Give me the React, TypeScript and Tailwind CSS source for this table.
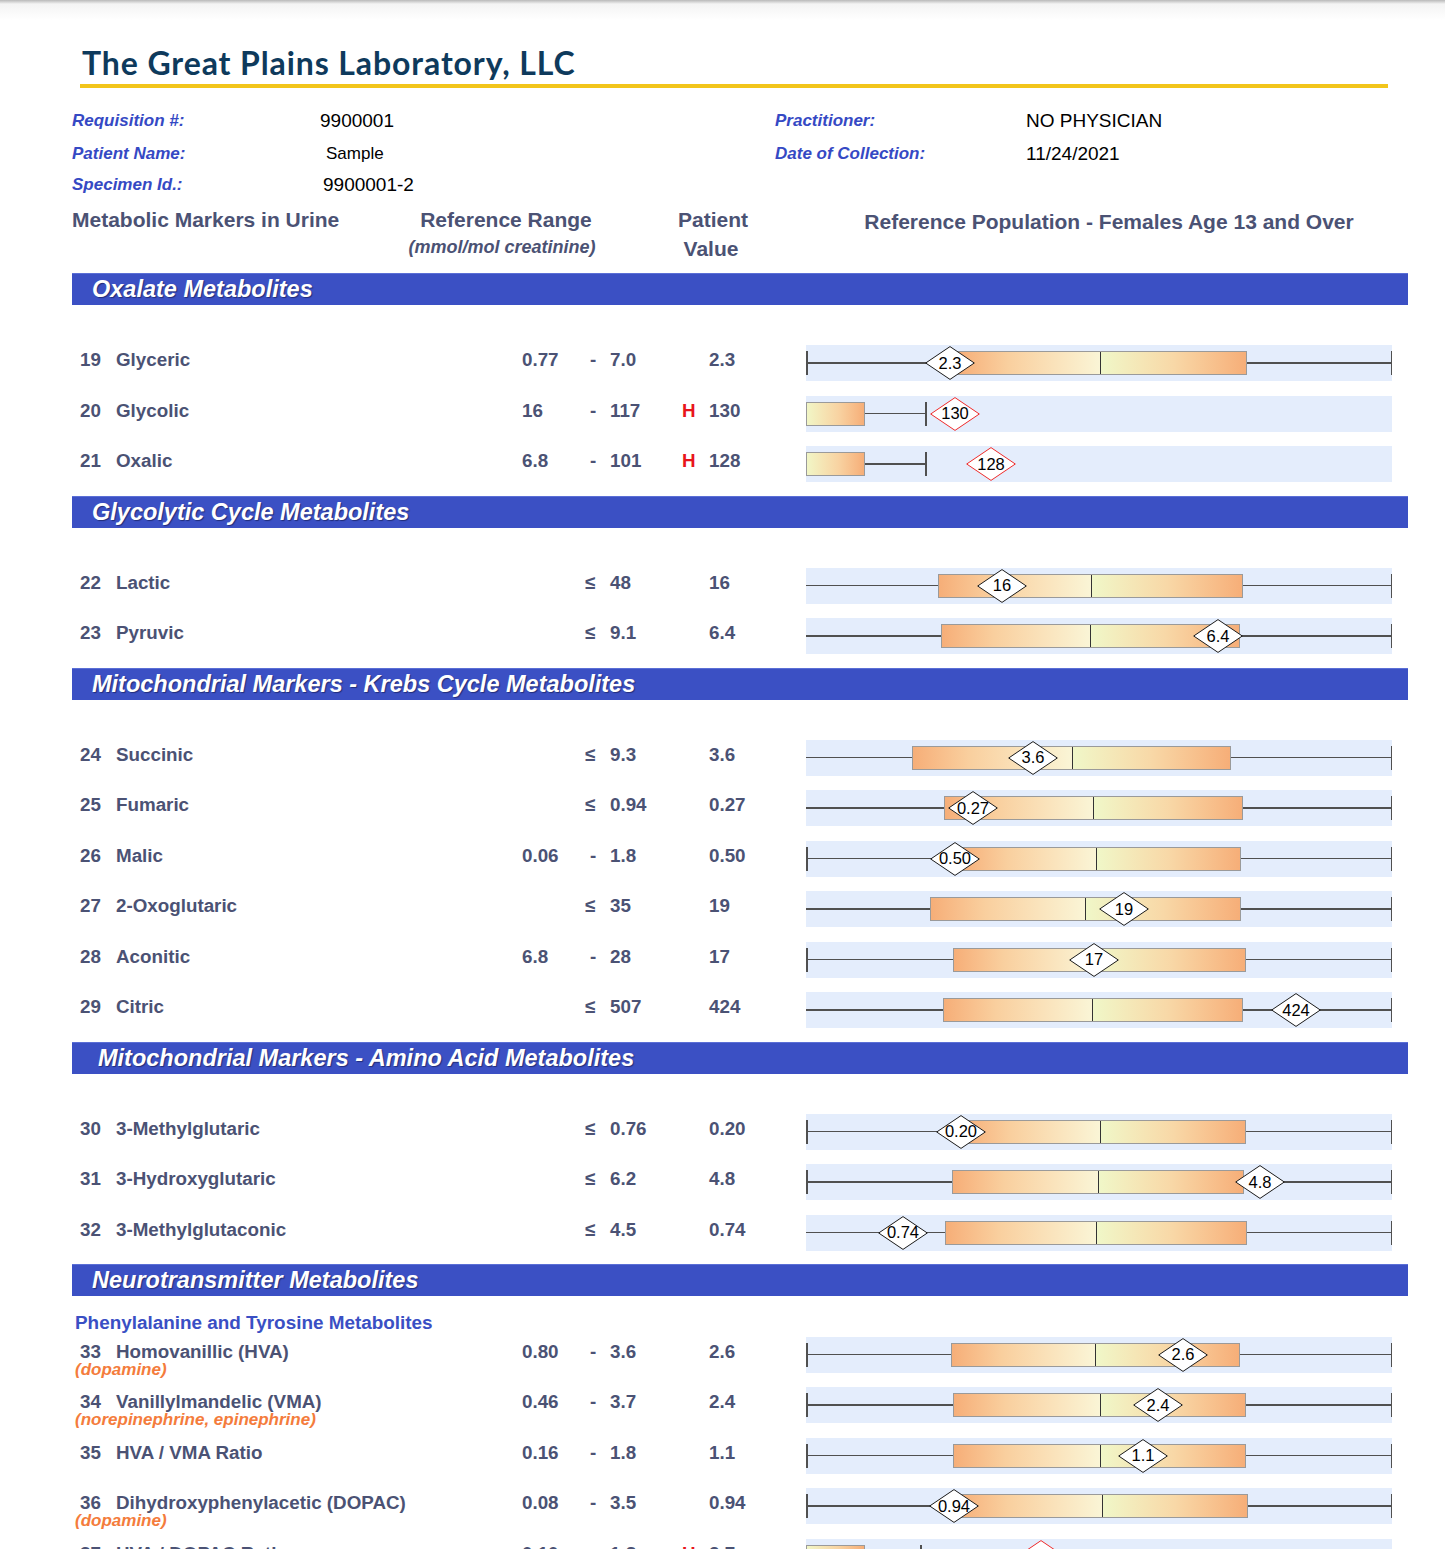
import React from "react";

type Diamond = { x: number; label: string; red?: boolean };
type BarSpec = {
  short?: boolean;
  box: [number, number];
  median?: number;
  leftCap?: boolean;
  whiskerEnd?: number;
  diamond: Diamond;
};
type RowSpec = {
  n: string;
  name: string;
  lo?: string;
  hi: string;
  h?: boolean;
  v: string;
  sub?: string;
  bar: BarSpec;
};
type Section = { title: string; indent?: boolean; subheader?: string; rows: RowSpec[] };

const BAND_W = 586;

const sections: Section[] = [
  {
    title: "Oxalate Metabolites",
    rows: [
      { n: "19", name: "Glyceric", lo: "0.77", hi: "7.0", v: "2.3", bar: { box: [151, 441], median: 294, leftCap: true, diamond: { x: 144, label: "2.3" } } },
      { n: "20", name: "Glycolic", lo: "16", hi: "117", h: true, v: "130", bar: { short: true, box: [0, 59], whiskerEnd: 119, diamond: { x: 149, label: "130", red: true } } },
      { n: "21", name: "Oxalic", lo: "6.8", hi: "101", h: true, v: "128", bar: { short: true, box: [0, 59], whiskerEnd: 119, diamond: { x: 185, label: "128", red: true } } },
    ],
  },
  {
    title: "Glycolytic Cycle Metabolites",
    rows: [
      { n: "22", name: "Lactic", hi: "48", v: "16", bar: { box: [132, 437], median: 285, diamond: { x: 196, label: "16" } } },
      { n: "23", name: "Pyruvic", hi: "9.1", v: "6.4", bar: { box: [135, 434], median: 284, diamond: { x: 412, label: "6.4" } } },
    ],
  },
  {
    title: "Mitochondrial Markers - Krebs Cycle Metabolites",
    rows: [
      { n: "24", name: "Succinic", hi: "9.3", v: "3.6", bar: { box: [106, 425], median: 266, diamond: { x: 227, label: "3.6" } } },
      { n: "25", name: "Fumaric", hi: "0.94", v: "0.27", bar: { box: [138, 437], median: 287, diamond: { x: 167, label: "0.27" } } },
      { n: "26", name: "Malic", lo: "0.06", hi: "1.8", v: "0.50", bar: { box: [152, 435], median: 290, leftCap: true, diamond: { x: 149, label: "0.50" } } },
      { n: "27", name: "2-Oxoglutaric", hi: "35", v: "19", bar: { box: [124, 435], median: 279, diamond: { x: 318, label: "19" } } },
      { n: "28", name: "Aconitic", lo: "6.8", hi: "28", v: "17", bar: { box: [147, 440], median: 288, leftCap: true, diamond: { x: 288, label: "17" } } },
      { n: "29", name: "Citric", hi: "507", v: "424", bar: { box: [137, 437], median: 286, diamond: { x: 490, label: "424" } } },
    ],
  },
  {
    title: "Mitochondrial Markers - Amino Acid Metabolites",
    indent: true,
    rows: [
      { n: "30", name: "3-Methylglutaric", hi: "0.76", v: "0.20", bar: { box: [155, 440], median: 294, leftCap: true, diamond: { x: 155, label: "0.20" } } },
      { n: "31", name: "3-Hydroxyglutaric", hi: "6.2", v: "4.8", bar: { box: [146, 438], median: 292, leftCap: true, diamond: { x: 454, label: "4.8" } } },
      { n: "32", name: "3-Methylglutaconic", hi: "4.5", v: "0.74", bar: { box: [139, 441], median: 290, diamond: { x: 97, label: "0.74" } } },
    ],
  },
  {
    title: "Neurotransmitter Metabolites",
    subheader: "Phenylalanine and Tyrosine Metabolites",
    rows: [
      { n: "33", name: "Homovanillic (HVA)", lo: "0.80", hi: "3.6", v: "2.6", sub: "(dopamine)", bar: { box: [145, 434], median: 289, leftCap: true, diamond: { x: 377, label: "2.6" } } },
      { n: "34", name: "Vanillylmandelic (VMA)", lo: "0.46", hi: "3.7", v: "2.4", sub: "(norepinephrine, epinephrine)", bar: { box: [147, 440], median: 294, leftCap: true, diamond: { x: 352, label: "2.4" } } },
      { n: "35", name: "HVA / VMA Ratio", lo: "0.16", hi: "1.8", v: "1.1", bar: { box: [147, 440], median: 294, leftCap: true, diamond: { x: 337, label: "1.1" } } },
      { n: "36", name: "Dihydroxyphenylacetic (DOPAC)", lo: "0.08", hi: "3.5", v: "0.94", sub: "(dopamine)", bar: { box: [149, 442], median: 296, leftCap: true, diamond: { x: 148, label: "0.94" } } },
      { n: "37", name: "HVA / DOPAC Ratio", lo: "0.10", hi: "1.8", h: true, v: "2.7", bar: { short: true, box: [0, 59], whiskerEnd: 114, diamond: { x: 235, label: "2.7", red: true } } },
    ],
  },
];

function DiamondMark({ d }: { d: Diamond }) {
  return (
    <div className="absolute top-[1px] h-[34px] w-[50px]" style={{ left: d.x - 25 }}>
      <svg width="50" height="34" viewBox="0 0 50 34" className="absolute inset-0">
        <polygon
          points="25,0.6 49.3,17 25,33.4 0.7,17"
          fill="#ffffff"
          stroke={d.red ? "#ee2a2a" : "#1a1a1a"}
          strokeWidth="1"
        />
      </svg>
      <span className="absolute inset-0 flex items-center justify-center font-['Liberation_Sans',Arial,sans-serif] text-[16.5px] leading-none text-black">
        {d.label}
      </span>
    </div>
  );
}

function Band({ b }: { b: BarSpec }) {
  const [l, r] = b.box;
  return (
    <div className="relative h-[36px] w-[586px] shrink-0 bg-[#e4edfc]">
      {b.short ? (
        <>
          <div className="absolute top-[17px] h-[1.5px] bg-[#505050]" style={{ left: r, width: (b.whiskerEnd ?? r) - r }} />
          <div className="absolute top-[6px] h-[24px] w-[1.5px] bg-[#505050]" style={{ left: b.whiskerEnd }} />
          <div
            className="absolute top-[6px] h-[24px] border border-[#9a9a9a] bg-linear-to-r from-[#f1f6c6] via-[#f8d3a2] via-55% to-[#f6ae78]"
            style={{ left: l, width: r - l }}
          />
        </>
      ) : (
        <>
          <div className="absolute left-0 top-[17px] h-[1.5px] w-[586px] bg-[#505050]" />
          {b.leftCap && <div className="absolute left-0 top-[6px] h-[24px] w-[1.5px] bg-[#505050]" />}
          <div className="absolute top-[6px] h-[24px] w-[1.5px] bg-[#505050]" style={{ left: BAND_W - 1.5 }} />
          <div className="absolute top-[6px] flex h-[24px] border border-[#9a9a9a]" style={{ left: l, width: r - l }}>
            <div
              className="h-full bg-linear-to-r from-[#f6ae78] via-[#f9cf9e] via-35% to-[#faf5d6]"
              style={{ width: (b.median ?? l) - l - 1 }}
            />
            <div className="h-full w-px bg-[#333333]" />
            <div className="h-full flex-1 bg-linear-to-r from-[#f0f7c8] via-[#f8d8a7] via-50% to-[#f6ae78]" />
          </div>
        </>
      )}
      <DiamondMark d={b.diamond} />
    </div>
  );
}

function Row({ r }: { r: RowSpec }) {
  return (
    <div className="flex h-[36px] items-start">
      <div className="relative flex w-[734px] shrink-0 pl-[8px] pt-[5px] text-[18.8px] font-bold leading-[20px] text-[#4b5274]">
        <span className="w-[36px] shrink-0">{r.n}</span>
        <span className="w-[406px] shrink-0 whitespace-nowrap">{r.name}</span>
        <span className="w-[63px] shrink-0">{r.lo ?? ""}</span>
        <span className="w-[25px] shrink-0">{r.lo ? <span className="pl-[5px]">-</span> : "≤"}</span>
        <span className="w-[72px] shrink-0">{r.hi}</span>
        <span className="w-[27px] shrink-0 text-[#e8141b]">{r.h ? "H" : ""}</span>
        <span className="w-[97px] shrink-0">{r.v}</span>
        {r.sub && (
          <span className="absolute left-[3px] top-[24px] whitespace-nowrap text-[17px] italic leading-[18px] text-[#f47c3c]">
            {r.sub}
          </span>
        )}
      </div>
      <Band b={r.bar} />
    </div>
  );
}

function SectionBlock({ s }: { s: Section }) {
  return (
    <div>
      <div className="h-[32px] border-t border-[#5b6fd6] bg-[#3b50c4]">
        <div
          className={`${s.indent ? "pl-[26px]" : "pl-[20px]"} text-[23.5px] font-bold italic leading-[30px] text-white [text-shadow:1px_1px_1px_rgba(0,0,30,0.45)]`}
        >
          {s.title}
        </div>
      </div>
      <div className={`${s.subheader ? "pt-[17px]" : "pt-[40px]"} flex flex-col gap-[14.5px] pb-[13.5px]`}>
        {s.subheader && (
          <div className="-mb-[11px] h-[20px] whitespace-nowrap pl-[3px] text-[18.9px] font-bold leading-[20px] text-[#3a4fc4]">
            {s.subheader}
          </div>
        )}
        {s.rows.map((r) => (
          <Row key={r.n} r={r} />
        ))}
      </div>
    </div>
  );
}

function InfoLabel({ children, w }: { children: React.ReactNode; w: string }) {
  return <div className={`${w} shrink-0 text-[17px] font-bold italic leading-[24px] text-[#3549c4]`}>{children}</div>;
}

export default function App() {
  return (
    <div className="relative h-[1549px] w-[1445px] overflow-hidden bg-white font-['Liberation_Sans',Arial,sans-serif]">
      <div className="h-[20px] bg-linear-to-b from-[#b9b9b9] via-[#f4f4f4] via-20% to-white" />
      <div className="mt-[25px] whitespace-nowrap pl-[82px] font-['Lato',sans-serif] text-[32px] font-bold leading-[36px] tracking-[0.9px] text-[#0e3a5c]">
        The Great Plains Laboratory, LLC
      </div>
      <div className="ml-[80px] mt-[3px] h-[4px] w-[1308px] bg-[#f2c51a]" />

      <div className="pl-[72px]">
        <div className="mt-[21px] flex h-[24px] items-center">
          <InfoLabel w="w-[248px]">Requisition #:</InfoLabel>
          <div className="w-[455px] shrink-0 text-[19px] leading-[24px] text-black">9900001</div>
          <InfoLabel w="w-[251px]">Practitioner:</InfoLabel>
          <div className="text-[19px] leading-[24px] text-black">NO PHYSICIAN</div>
        </div>
        <div className="mt-[9px] flex h-[24px] items-center">
          <InfoLabel w="w-[248px]">Patient Name:</InfoLabel>
          <div className="w-[455px] shrink-0 pl-[6px] text-[17px] leading-[24px] text-black">Sample</div>
          <InfoLabel w="w-[251px]">Date of Collection:</InfoLabel>
          <div className="text-[19px] leading-[24px] text-black">11/24/2021</div>
        </div>
        <div className="mt-[7px] flex h-[24px] items-center">
          <InfoLabel w="w-[248px]">Specimen Id.:</InfoLabel>
          <div className="w-[455px] shrink-0 pl-[3px] text-[19px] leading-[24px] text-black">9900001-2</div>
        </div>

        <div className="mt-[10px] flex text-[21px] font-bold leading-[26px] text-[#4b5274]">
          <div className="w-[330px] shrink-0">Metabolic Markers in Urine</div>
          <div className="flex w-[208px] shrink-0 flex-col items-center">
            <div>Reference Range</div>
            <div className="mt-[1px] pr-[8px] text-[18px] italic leading-[26px]">(mmol/mol creatinine)</div>
          </div>
          <div className="ml-[30px] flex w-[146px] shrink-0 flex-col items-center">
            <div>Patient</div>
            <div className="mt-[3px] pr-[4px]">Value</div>
          </div>
          <div className="ml-[20px] w-[606px] shrink-0 pt-[2px] text-center">Reference Population - Females Age 13 and Over</div>
        </div>

        <div className="mt-[11px] w-[1336px]">
          {sections.map((s) => (
            <SectionBlock key={s.title} s={s} />
          ))}
        </div>
      </div>
    </div>
  );
}
